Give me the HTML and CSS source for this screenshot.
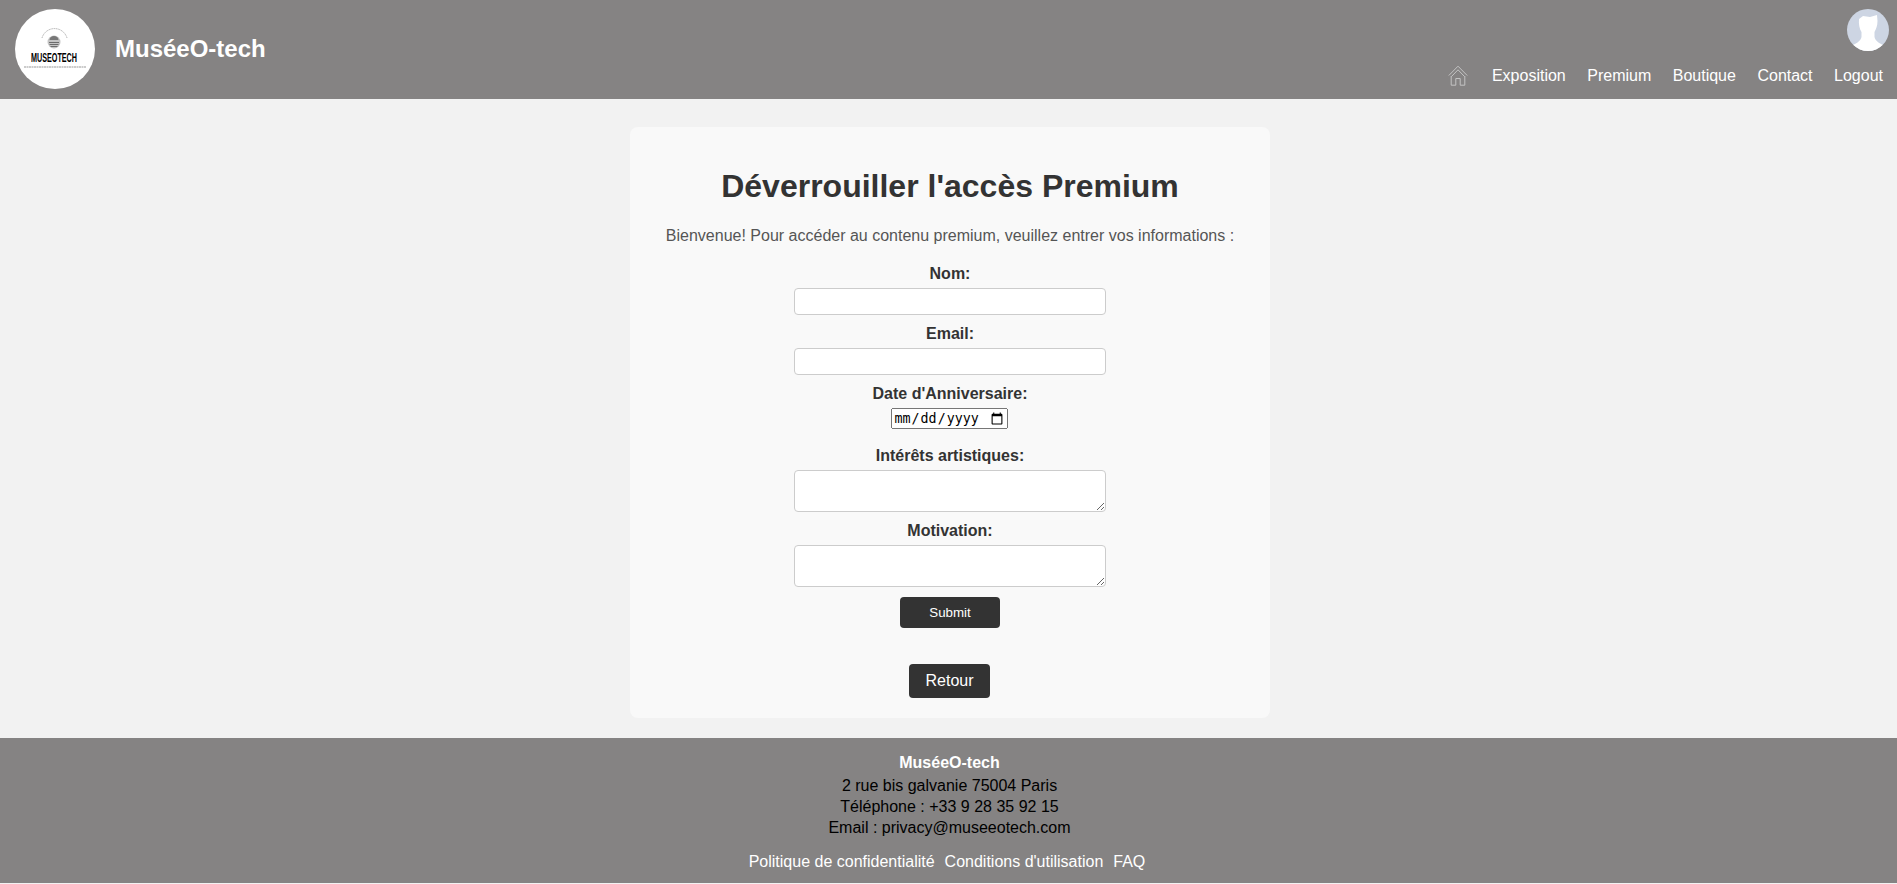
FILE: index.html
```html
<!DOCTYPE html>
<html lang="fr">
<head>
<meta charset="utf-8">
<title>MuséeO-tech</title>
<link rel="stylesheet" href="styles.css">
</head>
<body>
<header class="site-header">
  <div class="brand">
    <svg class="logo" viewBox="0 0 80 80" aria-label="Logo">
      <circle cx="40" cy="40" r="40" fill="#fff"/>
      <path d="M27 29 A13 13 0 0 1 52 29" fill="none" stroke="#999" stroke-width=".8" stroke-dasharray="1.200 .6"/>
      <circle cx="39" cy="33" r="6.500" fill="#c4c4c4"/>
      <path d="M34.500 31 A4.500 4 0 0 1 43.500 31 Z" fill="#777"/>
      <path d="M34 33.500h10M34.500 35.500h9M35.500 37.500h7" stroke="#555" stroke-width=".8"/>
      <text class="logo-word" x="39" y="53" text-anchor="middle" textLength="46" lengthAdjust="spacingAndGlyphs">MUSEOTECH</text>
      <line x1="9" y1="58" x2="71" y2="58" stroke="#999" stroke-width="1.200" stroke-dasharray="2 .5"/>
    </svg>
    <span class="brand-name">MuséeO-tech</span>
  </div>
  <div class="header-right">
    <svg class="avatar" viewBox="0 0 42 42" aria-label="Profil">
      <defs><clipPath id="avatar-clip"><circle cx="21" cy="21" r="21"/></clipPath></defs>
      <circle cx="21" cy="21" r="21" fill="#cdd5e3"/>
      <path clip-path="url(#avatar-clip)" d="M12 10 L16 7 L23 8 L30 6 L30.500 12 C30.500 17 29 20 27.500 23 L27.500 28 C28.500 32 32 34 36 36 L37 42 L5 42 L6 36 C10 34 13.500 32 14.500 28 L14.500 23 C12.500 20 11.500 15 12 10 Z" fill="#fff"/>
    </svg>
    <nav class="main-nav">
      <a class="home-link" href="#" aria-label="Accueil">
        <svg class="home-icon" viewBox="0 0 20 21">
          <path d="M.8 10.500 10 1.200l9.200 9.300" />
          <path d="M3.500 11.500 10 4.800l6.500 6.700" />
          <path d="M3.200 11v9.200h4.600v-6.700h4.400v6.700h4.600V11" />
        </svg>
      </a>
      <a href="#">Exposition</a>
      <a href="#">Premium</a>
      <a href="#">Boutique</a>
      <a href="#">Contact</a>
      <a href="#">Logout</a>
    </nav>
  </div>
</header>
<main class="content">
  <section class="card">
    <h1>Déverrouiller l'accès Premium</h1>
    <p class="intro">Bienvenue! Pour accéder au contenu premium, veuillez entrer vos informations :</p>
    <form class="premium-form">
      <label for="nom">Nom:</label>
      <input class="field" id="nom" type="text">
      <label for="email">Email:</label>
      <input class="field" id="email" type="email">
      <label for="date">Date d'Anniversaire:</label>
      <input class="date-field" id="date" type="date">
      <label for="interets">Intérêts artistiques:</label>
      <textarea class="field area" id="interets"></textarea>
      <label for="motivation">Motivation:</label>
      <textarea class="field area" id="motivation"></textarea>
      <button class="submit" type="button">Submit</button>
    </form>
    <a class="back" href="#">Retour</a>
  </section>
</main>
<footer class="site-footer">
  <strong class="footer-name">MuséeO-tech</strong>
  <p class="footer-lines">2 rue bis galvanie 75004 Paris<br>Téléphone : +33 9 28 35 92 15<br>Email : privacy@museeotech.com</p>
  <nav class="footer-nav">
    <a href="#">Politique de confidentialité</a>
    <a href="#">Conditions d'utilisation</a>
    <a href="#">FAQ</a>
  </nav>
</footer>
</body>
</html>
```

FILE: styles.css
```css
* { box-sizing: border-box; }
html, body { margin: 0; }
body {
  font-family: "Liberation Sans", Arial, sans-serif;
  font-size: 16px;
  background: #f2f2f2;
  color: #333;
}
a { text-decoration: none; color: #fff; }

.site-header {
  height: 99px;
  background: #858383;
  display: flex;
  justify-content: space-between;
  padding: 9px 8px 0 15px;
}
.brand { display: flex; align-items: flex-start; gap: 20px; }
.logo { width: 80px; height: 80px; display: block; overflow: visible; }
.logo-word { font-family: "Liberation Sans", Arial, sans-serif; font-weight: 700; font-size: 12.5px; fill: #000; }
.brand-name { font-size: 24px; font-weight: 700; color: #fff; line-height: 28px; margin-top: 26px; }

.header-right { display: flex; flex-direction: column; align-items: flex-end; }
.avatar { width: 42px; height: 42px; display: block; }
.main-nav { display: flex; align-items: center; gap: 21.5px; margin: 7px 6px 0 0; height: 36px; }
.home-link { display: block; margin: -2px 2px 0 0; height: 21px; }
.home-icon { width: 20px; height: 21px; display: block; fill: none; stroke: #c4c4c4; stroke-width: 1; }

.content { padding: 28px 0 20px; display: flex; justify-content: center; }
.card {
  width: 640px;
  margin-left: 3px;
  height: 591px;
  background: #f9f9f9;
  border-radius: 8px;
  padding: 41px 20px 20px;
  text-align: center;
}
h1 { font-size: 32px; line-height: 37px; margin: 0; color: #333; }
.intro { margin: 22px 0 0; color: #555; line-height: 18px; }

.premium-form { display: flex; flex-direction: column; align-items: center; margin-top: 19px; }
.premium-form label { font-weight: 700; line-height: 18px; padding-top: 1px; margin-bottom: 5px; color: #333; }
.field {
  width: 312px;
  height: 27px;
  margin-bottom: 9px;
  border: 1px solid #ccc;
  border-radius: 4px;
  background: #fff;
  display: block;
}
.area { height: 42px; }
.date-field { margin: 0 2px 17px 0; width: 117px; height: 21px; }
.area + label + .area { margin-bottom: 10px; }
.submit {
  width: 100px;
  height: 31px;
  background: #333;
  color: #fff;
  border: 0;
  border-radius: 4px;
  font-family: inherit;
  font-size: 13.333px;
  font-weight: 400;
}
.back {
  display: block;
  width: 81px;
  height: 34px;
  margin: 36px 0 0 259px;
  line-height: 34px;
  background: #333;
  border-radius: 4px;
  color: #fff;
}

.site-footer {
  height: 145px;
  background: #858383;
  color: #000;
  text-align: center;
  padding: 16px 0 0 2px;
}
.footer-name { display: block; color: #fff; line-height: 18px; }
.footer-lines { margin: 3px 0 0; line-height: 21px; }
.footer-nav { display: flex; justify-content: center; gap: 10px; margin-top: 15px; line-height: 18px; padding-right: 5px; }
```
